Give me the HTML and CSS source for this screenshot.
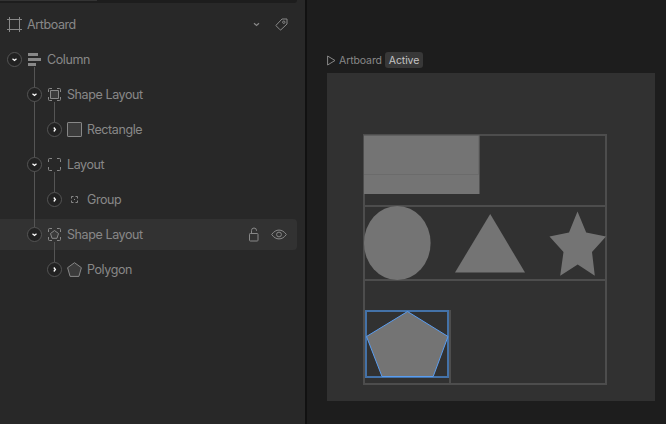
FILE: index.html
```
<!DOCTYPE html>
<html lang="en">
<head>
<meta charset="utf-8">
<title>Artboard</title>
<link rel="stylesheet" href="styles.css">
</head>
<body>
<svg class="defs" width="0" height="0" aria-hidden="true">
  <symbol id="open" viewBox="0 0 15 15"><circle class="ring" cx="7.5" cy="7.5" r="7"/><path class="chev" d="M5.5 6.8 7.5 8.4 9.5 6.8"/></symbol>
  <symbol id="closed" viewBox="0 0 15 15"><circle class="ring" cx="7.5" cy="7.5" r="7"/><path class="chev" d="M6.8 5.5 8.4 7.5 6.8 9.5"/></symbol>
  <symbol id="corners" viewBox="0 0 15 15"><path d="M1.5 5V2.500Q1.500 1.500 2.500 1.500H5M10 1.500H12.500Q13.500 1.500 13.500 2.500V5M13.500 10V12.500Q13.500 13.500 12.500 13.500H10M5 13.500H2.500Q1.500 13.500 1.500 12.500V10"/></symbol>
</svg>
<div class="app">
  <aside class="panel">
    <div class="strip"><div class="tab"></div></div>
    <div class="row root">
      <svg class="icon" viewBox="0 0 15 15"><path d="M2.5 0V15M12.5 0V15M0 2.5H15M0 12.5H15"/></svg>
      <span class="label">Artboard</span>
      <svg class="more" viewBox="0 0 7 5"><path d="M1 1.2 3.5 3.4 6 1.2"/></svg>
      <svg class="tag" viewBox="0 0 13 13"><path d="M7 1H12V6L5.9 11.8Q5.5 12.2 5.1 11.8L1.2 7.9Q.8 7.5 1.2 7.1Z"/><circle cx="8.8" cy="4.2" r="1.2"/></svg>
    </div>
    <div class="node">
      <div class="row"><svg class="toggle"><use href="#open"/></svg>
        <svg class="icon" viewBox="0 0 15 15"><path class="bars" d="M1 1h10v3H1zM1 6h13v3H1zM1 11h8v3H1z"/></svg>
        <span class="label">Column</span></div>
      <div class="children outer">
        <div class="node">
          <div class="row"><svg class="toggle"><use href="#open"/></svg>
            <svg class="icon" viewBox="0 0 15 15"><use href="#corners"/><path class="tint" d="M3.5 3.5h8v8h-8z"/></svg>
            <span class="label">Shape Layout</span></div>
          <div class="children">
            <div class="row"><svg class="toggle"><use href="#closed"/></svg>
              <svg class="icon" viewBox="0 0 15 15"><rect class="tint" x=".5" y=".5" width="14" height="14" rx=".6"/></svg>
              <span class="label">Rectangle</span></div>
          </div>
        </div>
        <div class="node">
          <div class="row"><svg class="toggle"><use href="#open"/></svg>
            <svg class="icon" viewBox="0 0 15 15"><use href="#corners"/></svg>
            <span class="label">Layout</span></div>
          <div class="children">
            <div class="row"><svg class="toggle"><use href="#closed"/></svg>
              <svg class="icon" viewBox="0 0 15 15"><path d="M4.500 6.500V4.500H6.500M8.500 4.500h2v2M10.500 8.500v2h-2M6.500 10.500h-2v-2M7 7.500h1"/></svg>
              <span class="label">Group</span></div>
          </div>
        </div>
        <div class="node">
          <div class="row selected"><svg class="toggle"><use href="#open"/></svg>
            <svg class="icon" viewBox="0 0 15 15"><use href="#corners"/><path class="tint" d="M7.500 3.500 11.500 6.500 10 11.300H5L3.500 6.500Z"/></svg>
            <span class="label">Shape Layout</span>
            <svg class="lock" viewBox="0 0 10 15"><rect x=".5" y="6.500" width="8.500" height="7.500" rx=".8"/><path d="M2.500 6.500V3.500Q2.500 1 5 1 7.500 1 7.500 3.500V4"/></svg>
            <svg class="eye" viewBox="0 0 16 11"><path d="M.7 5.500C4.600-.4 11.400-.4 15.300 5.500 11.400 11.400 4.600 11.400.7 5.500Z"/><circle cx="8" cy="5.500" r="2.400"/></svg></div>
          <div class="children">
            <div class="row"><svg class="toggle"><use href="#closed"/></svg>
              <svg class="icon" viewBox="0 0 15 15"><path class="tint" d="M7.500.7 14.400 5.700 11.900 14.400H3.100L.6 5.700Z"/></svg>
              <span class="label">Polygon</span></div>
          </div>
        </div>
      </div>
    </div>
  </aside>
  <main class="stage">
    <div class="caption">
      <svg class="play" viewBox="0 0 9 11"><path d="M.6 1V10L8 5.500Z"/></svg>
      <span class="name">Artboard</span>
      <span class="badge">Active</span>
    </div>
    <svg class="artboard" viewBox="327 73 328 328">
      <path class="frame" d="M364 135H606V384H364ZM364 206H606M364 280H606M366 311H450V384"/>
      <g class="shapes">
        <path d="M364 135.500h115.500V194H364z"/>
        <ellipse cx="397.300" cy="243" rx="33.300" ry="37"/>
        <path d="M490.200 214 525 272.500H455Z"/>
        <path d="M577.500 211.500 586.200 232.600 606 236.400 592 252 594.800 275.700 577.700 264.500 560.200 275.700 563.500 252 549.500 236.400 569 232.600Z"/>
      </g>
      <path class="seam" d="M364 174.500H478.500V136"/>
      <path class="bounds" d="M366 311H448V377H366Z"/>
      <path class="pentagon" d="M407.500 311.500 448 336.500 433.200 376.500H382L366.500 336.500Z"/>
    </svg>
  </main>
</div>
</body>
</html>
```
FILE: styles.css
```
* { box-sizing: border-box; }
body { margin: 0; background: #1d1d1d; font-family: Inter, sans-serif; }
svg { display: block; flex: none; fill: none; stroke: #888; stroke-width: 1; }
.defs { position: absolute; }
.app { display: flex; width: 666px; height: 424px; overflow: hidden; }

.panel { width: 307px; background: #282828; border-right: 2px solid #111; }
.strip { width: 297px; height: 3px; margin-bottom: 6px; background: #1d1d1d; border-bottom-right-radius: 3px; }
.tab { width: 97px; height: 1px; background: #333; }
.row { display: flex; align-items: center; width: 297px; height: 31px; margin-bottom: 4px; padding-left: 7px; border-radius: 0 4px 4px 0; }
.children .row { padding-left: 27px; }
.children .children .row { padding-left: 47px; }
.selected { background: #323232; }
.label { flex: 1; margin-left: 5px; color: #888; font-size: 12.5px; line-height: 16px; letter-spacing: -0.4px; white-space: nowrap; }

.toggle { position: relative; z-index: 1; width: 15px; height: 15px; margin-right: 5px; }
.ring { fill: #222; stroke: #555; }
.chev { stroke: #fff; stroke-width: 1.3; }
.icon { width: 15px; height: 15px; }
.bars { fill: #888; stroke: none; }
.tint { fill: #3b3b3b; }
.more { width: 7px; height: 5px; margin-right: 15px; stroke-width: 1.3; }
.tag { width: 13px; height: 13px; margin-right: 9px; }
.lock { width: 10px; height: 15px; margin-right: 12px; }
.eye { width: 16px; height: 11px; margin-right: 10px; }

.children { position: relative; }
.children::before { content: ""; position: absolute; left: 54px; top: -12px; width: 1px; height: 20px; background: #555; }
.outer::before { left: 34px; height: 160px; }

.stage { flex: 1; padding: 52px 0 0 20px; }
.caption { display: flex; align-items: center; height: 16px; margin-bottom: 5px; font-size: 10.5px; line-height: 17px; }
.play { width: 9px; height: 11px; }
.name { width: 46px; margin-left: 3px; padding-top: 1px; color: #888; letter-spacing: -0.1px; }
.badge { width: 38px; height: 16px; border-radius: 3px; background: #383838; color: #c4c4c4; text-align: center; letter-spacing: -0.1px; }
.artboard { width: 328px; height: 328px; background: #313131; }
.shapes { fill: #747474; stroke: none; }
.seam { stroke: #6b6b6b; }
.frame { stroke: #4d4d4d; stroke-width: 2; }
.pentagon { fill: #747474; stroke: #5a9df0; }
.bounds { stroke: #4472a8; stroke-width: 2; }
```
